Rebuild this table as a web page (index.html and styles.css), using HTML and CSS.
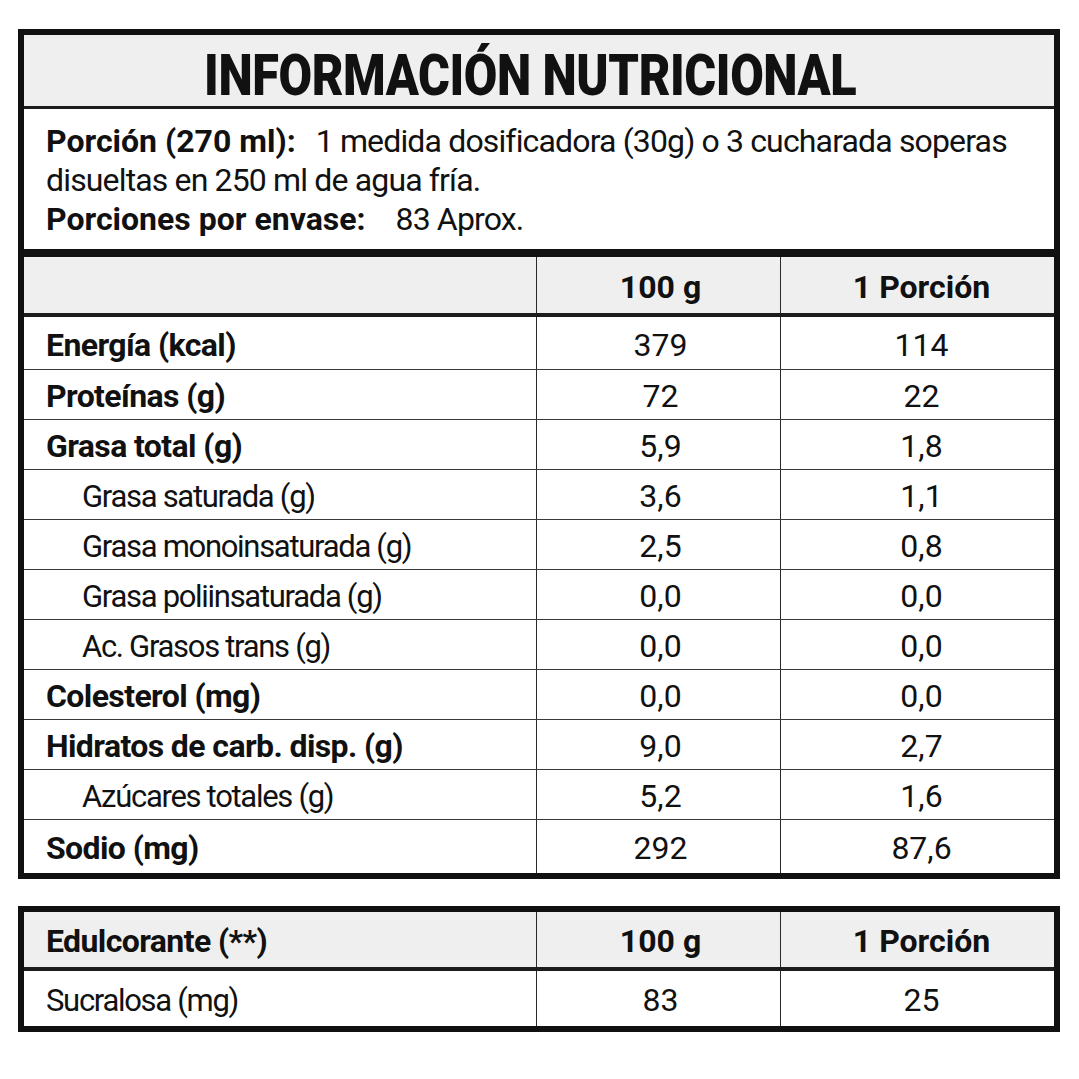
FILE: index.html
```html
<!DOCTYPE html>
<html lang="es">
<head>
<meta charset="utf-8">
<title>Información Nutricional</title>
<link rel="stylesheet" href="styles.css">
</head>
<body>
<div class="page">
  <section class="panel">
    <h1 class="title"><span class="title-text">INFORMACIÓN NUTRICIONAL</span></h1>
    <div class="serving">
      <div class="line"><b>Porción (270 ml):</b><span class="gap">1 medida dosificadora (30g) o 3 cucharada soperas</span></div>
      <div class="line">disueltas en 250 ml de agua fría.</div>
      <div class="line"><b>Porciones por envase:</b><span class="gap gap-wide">83 Aprox.</span></div>
    </div>
    <div class="grid">
      <div class="row head"><div class="c1"></div><div class="c2">100 g</div><div class="c3">1 Porción</div></div>
      <div class="row first"><div class="c1 b">Energía (kcal)</div><div class="c2">379</div><div class="c3">114</div></div>
      <div class="row"><div class="c1 b">Proteínas (g)</div><div class="c2">72</div><div class="c3">22</div></div>
      <div class="row"><div class="c1 b">Grasa total (g)</div><div class="c2">5,9</div><div class="c3">1,8</div></div>
      <div class="row"><div class="c1 sub">Grasa saturada (g)</div><div class="c2">3,6</div><div class="c3">1,1</div></div>
      <div class="row"><div class="c1 sub">Grasa monoinsaturada (g)</div><div class="c2">2,5</div><div class="c3">0,8</div></div>
      <div class="row"><div class="c1 sub">Grasa poliinsaturada (g)</div><div class="c2">0,0</div><div class="c3">0,0</div></div>
      <div class="row"><div class="c1 sub">Ac. Grasos trans (g)</div><div class="c2">0,0</div><div class="c3">0,0</div></div>
      <div class="row"><div class="c1 b">Colesterol (mg)</div><div class="c2">0,0</div><div class="c3">0,0</div></div>
      <div class="row"><div class="c1 b">Hidratos de carb. disp. (g)</div><div class="c2">9,0</div><div class="c3">2,7</div></div>
      <div class="row"><div class="c1 sub">Azúcares totales (g)</div><div class="c2">5,2</div><div class="c3">1,6</div></div>
      <div class="row last"><div class="c1 b">Sodio (mg)</div><div class="c2">292</div><div class="c3">87,6</div></div>
    </div>
  </section>
  <section class="panel panel2">
    <div class="grid">
      <div class="row head head2"><div class="c1 b">Edulcorante (**)</div><div class="c2">100 g</div><div class="c3">1 Porción</div></div>
      <div class="row last2"><div class="c1 reg">Sucralosa (mg)</div><div class="c2">83</div><div class="c3">25</div></div>
    </div>
  </section>
</div>
</body>
</html>
```
FILE: styles.css
```css
* { box-sizing: border-box; }
html, body { margin: 0; padding: 0; background: #ffffff; }
body {
  font-family: "Roboto", "Liberation Sans", sans-serif;
  color: #111111;
}
.page {
  width: 1079px;
  padding: 29px 19px 0 18px;
}
.panel {
  border: 6px solid #111111;
  background: #ffffff;
}
.panel2 { margin-top: 27px; }
.title {
  margin: 0;
  height: 74px;
  padding-top: 10px;
  padding-right: 18px;
  line-height: 61px;
  background: #efefef;
  border-bottom: 3px solid #1c1c1c;
  text-align: center;
  font-family: "Roboto", sans-serif;
  font-weight: 900;
  font-size: 58px;
  letter-spacing: -0.5px;
  color: #111111;
  white-space: nowrap;
}
.title-text {
  display: inline-block;
  transform: scaleX(0.84);
  transform-origin: center;
}
.serving {
  height: 148px;
  padding: 13px 10px 0 22px;
  border-bottom: 8px solid #111111;
  font-size: 32px;
  line-height: 39px;
  white-space: nowrap;
  letter-spacing: -0.85px;
}
.serving b { font-weight: 700; letter-spacing: 0; }
.gap { margin-left: 20px; }
.gap-wide { margin-left: 30px; }
.grid { display: flex; flex-direction: column; }
.row {
  display: grid;
  grid-template-columns: 512px 244px 1fr;
  height: 50px;
  border-bottom: 1px solid #3a3a3a;
  font-size: 32px;
}
.row > div {
  display: flex;
  align-items: center;
  padding-top: 3px;
}
.c1 { padding-left: 22px; }
.c2, .c3 {
  justify-content: center;
  border-left: 1.5px solid #2a2a2a;
}
.c2 { padding-left: 4px; }
.c3 { padding-left: 8px; }
.b { font-weight: 700; letter-spacing: -0.6px; }
.sub { padding-left: 58px; font-size: 31px; letter-spacing: -1.3px; }
.reg { font-size: 31px; letter-spacing: -1.3px; }
.head {
  height: 60px;
  background: #efefef;
  border-bottom: 4px solid #1c1c1c;
  font-weight: 700;
}
.first { height: 53px; }
.last { height: 53px; border-bottom: none; }
.head2 { height: 59px; }
.last2 { height: 55px; border-bottom: none; }
```
